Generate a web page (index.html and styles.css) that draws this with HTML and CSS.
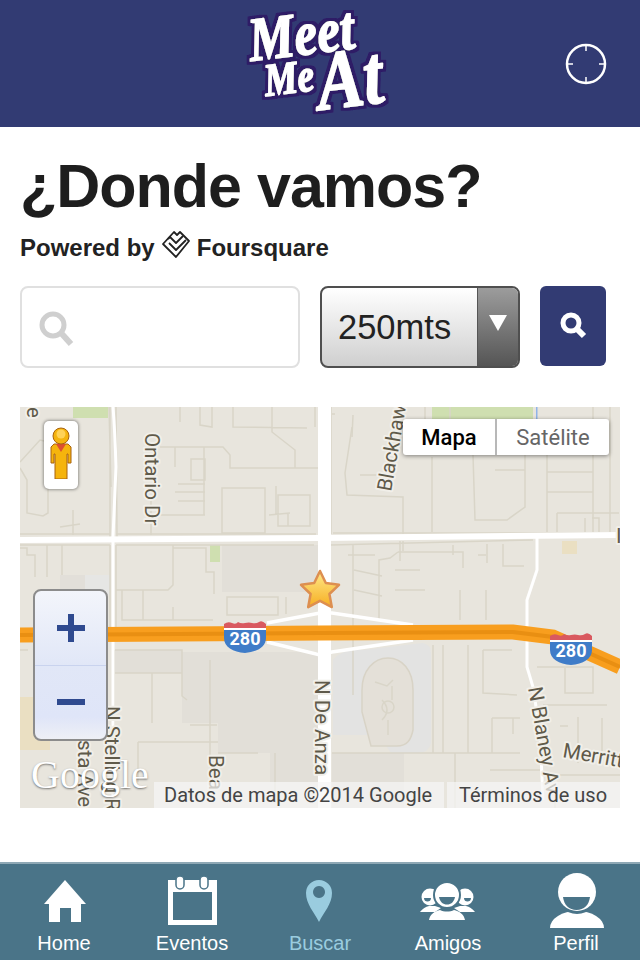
FILE: index.html
```html
<!DOCTYPE html>
<html lang="es">
<head>
<meta charset="utf-8">
<title>Meet Me At</title>
<link rel="stylesheet" href="styles.css">
</head>
<body>
<div class="app">
  <header class="topbar">
    <svg class="logo" viewBox="0 0 150 110" width="150" height="110">
      <defs>
        <linearGradient id="logoFill" gradientUnits="userSpaceOnUse" x1="0" y1="5" x2="0" y2="105">
          <stop offset="0" stop-color="#ffffff"/>
          <stop offset="0.55" stop-color="#f2f2f2"/>
          <stop offset="1" stop-color="#c4c4c4"/>
        </linearGradient>
        <filter id="logoOutline" x="-10%" y="-10%" width="120%" height="120%">
          <feMorphology in="SourceAlpha" operator="dilate" radius="2.6" result="fat"/>
          <feFlood flood-color="#2d1a66"/>
          <feComposite in2="fat" operator="in" result="edge"/>
          <feMerge>
            <feMergeNode in="edge"/>
            <feMergeNode in="SourceGraphic"/>
          </feMerge>
        </filter>
      </defs>
      <g class="logo-text">
        <text class="logo-meet" transform="translate(7 50) rotate(-7)" textLength="106" lengthAdjust="spacingAndGlyphs">Meet</text>
        <text class="logo-me" transform="translate(22 85) rotate(-7)" textLength="50" lengthAdjust="spacingAndGlyphs">Me</text>
        <text class="logo-at" transform="translate(76 99) rotate(-7)" textLength="66" lengthAdjust="spacingAndGlyphs">At</text>
      </g>
    </svg>
    <svg class="locate" viewBox="0 0 44 44" width="44" height="44">
      <circle cx="22" cy="22" r="19"/>
      <path d="M22 3v6M22 35v6M3 22h6M35 22h6"/>
    </svg>
  </header>

  <main class="content">
    <h1 class="title">¿Donde vamos?</h1>
    <p class="powered">
      <span>Powered by</span>
      <svg class="fsq" viewBox="0 0 30 30" width="30" height="30">
        <path d="M15 28 2 15 13 3l3 3 3-3 9 9z"/>
        <path d="M8 14l7 7L25 11M7 10l2-2 6 6 7-7"/>
      </svg>
      <span>Foursquare</span>
    </p>

    <div class="search">
      <div class="field">
        <svg class="glass" viewBox="0 0 36 36" width="36" height="36">
          <circle cx="15" cy="14" r="11"/>
          <path d="M24 23l9 10"/>
        </svg>
      </div>
      <div class="select">
        <span class="select-value">250mts</span>
        <span class="select-arrow"><i class="triangle"></i></span>
      </div>
      <button class="go" type="button" aria-label="Buscar">
        <svg class="go-icon" viewBox="0 0 28 28" width="28" height="28">
          <circle cx="12" cy="12" r="8"/>
          <path d="M18 18l7 7"/>
        </svg>
      </button>
    </div>

    <section class="map">
      <svg class="map-canvas" viewBox="20 407 600 401" width="600" height="401">
        <defs>
          <linearGradient id="starFill" x1="0" y1="0" x2="0" y2="1">
            <stop offset="0" stop-color="#ffe98a"/>
            <stop offset="1" stop-color="#f6ae22"/>
          </linearGradient>
          <clipPath id="shieldClip"><path d="M0 3q4-3 8-1t6-1q3 2 7 1t7 0q4 1 7-1t7 2V17c0 9-9 14-21 15C9 31 0 26 0 17z"/></clipPath>
        </defs>
        <rect class="land" x="20" y="407" width="600" height="401"/>

        <rect class="green" x="73" y="407" width="35" height="11"/>
        <rect class="green" x="432" y="407" width="101" height="14"/>
        <rect class="water" x="536" y="407" width="1.5" height="12"/>
        <rect class="green" x="210" y="545" width="10" height="17"/>
        <rect class="beige" x="562" y="541" width="15" height="13"/>
        <rect class="beige" x="20" y="697" width="30" height="53"/>

        <rect class="bldg" x="222" y="545" width="96" height="47"/>
        <rect class="bldg2" x="60" y="575" width="25" height="20"/>
        <rect class="bldg3" x="85" y="575" width="25" height="20"/>
        <rect class="bldg" x="115" y="650" width="67" height="23"/>
        <path class="bldg" d="M182 652H318V782H270V753H218V723H182z"/>
        <path class="bldg" d="M332 753H404V808H332z"/>

        <path class="lot" d="M333 660q10-12 30-10l60-7q8 2 8 10v90q-2 10-14 10h-26l-12-18H333z"/>
        <path class="oval" d="M362 690c0-20 12-32 26-32s25 12 25 32v40c-2 10-6 16-16 16h-26l-9-34z"/>
        <path class="minor" d="M375 682l12 4 6-6M392 686v14M382 700q10 10 0 20M388 720v15"/>
        <circle class="minor" cx="388" cy="707" r="6"/>

        <path class="minor" d="M20 468l7 12v33l16 3 5-3v-30M20 462l20-22 22 5M60 527l20-3M73 510v25M110 407v130M109 407l2 80"/>
        <path class="minor" d="M116 407l1 130M160 447h63l7 8v13h90M180 407v15M200 407v18l12 2v-20M233 407v20l74 1M272 407v25l23 18v18M315 407v20M175 447v20M151 500v35"/>
        <path class="minor" d="M191 459h14v21h-14zM178 484h27M175 492h30M178 501h27M204 447v68M160 515h45M222 488h43v45h-43zM276 486v29M269 515l21-2M278 495h32v31h-32zM288 513v13"/>
        <path class="minor" d="M116 534h200M20 534h90M20 545h90M116 545h198"/>
        <path class="minor" d="M20 548h7v7h8v22M47 545v32M62 545v30M110 545v90M116 545v90M173 545v40l-5 5H116M173 548h33v24h8v22"/>
        <path class="minor" d="M122 590v30h91M143 590v30M173 607v13M227 597h51v18h-51zM286 597v17"/>
        <path class="minor" d="M115 650h67v23H115M152 673v50M182 650v46l5 4M210 660v120M190 725h27M218 753h40M138 742h80M138 742v40M20 650h8M114 650v155M330 660v148M275 753v50"/>
        <path class="minor" d="M331 407v127M352 427l-7 46 2 22 56 2v30M335 414h-3M403 497v37M432 457v75M473 455l2 65h32l18-13v-52M547 455v77M593 407v125M547 472h46M547 492h46M557 513v19M557 513h62M585 518v14M592 518h7v14M610 407v125M333 533h284M360 475h20"/>
        <path class="minor" d="M331 545l202-5M353 545v150M400 541v20M403 541v10M398 552h65v16M398 552l-8 6-11 2v60M348 555h27M354 570l28 6M354 590l28 6M395 570h25M395 590h30M460 590v30M486 590v30M487 544v19M503 544v22h21M478 555h8M453 545v10"/>
        <path class="minor" d="M433 645v108M443 645v108M468 645v108M483 650h29M483 650v43l34 2M537 667h56v26h-28v-25M543 705h64M492 718h28M492 718v35M513 718v16M332 753h188M578 717v46M602 718v35M560 726h8M455 753v55M555 775v33M490 770h50M560 775h60"/>
        <path class="minor" d="M353 415l-1 22M425 407v25M450 407v48M470 420h40M495 470h30"/>

        <path class="road" d="M113 407q2 25 3 60l-3 70v271"/>
        <path class="road-major" d="M20 540q150-1 300-2l300-3"/>
        <rect class="road-wide" x="318" y="407" width="13" height="401"/>
        <path class="road" d="M537 538v32l-10 30v67l6 20 7 46 3 67"/>
        <path class="ramp" d="M267 623l53-10 12 0 81 12M267 642l53 13 12-3 81-12"/>
        <path class="freeway" d="M20 635l300-2 193-1 40 5 67 30"/>
        <path class="freeway-core" d="M20 635l300-2 193-1 40 5 67 30"/>

        <g class="labels">
          <text class="lbl" transform="translate(145 433) rotate(90)">Ontario Dr</text>
          <text class="lbl" transform="translate(391 492) rotate(-80)">Blackhaw</text>
          <text class="lbl" transform="translate(315 680) rotate(90)">N De Anza</text>
          <text class="lbl" transform="translate(105 706) rotate(90)">N Stelling R</text>
          <text class="lbl" transform="translate(78 740) rotate(90)">sta Ave</text>
          <text class="lbl" transform="translate(209 755) rotate(90)">Bea</text>
          <text class="lbl" transform="translate(528 688) rotate(80)">N Blaney Av</text>
          <text class="lbl" transform="translate(562 757) rotate(10)">Merritt</text>
          <text class="lbl" transform="translate(27 407) rotate(90)">e</text>
          <text class="lbl" x="616" y="543">I</text>
        </g>

        <g class="shield" transform="translate(224 621)">
          <g clip-path="url(#shieldClip)">
            <rect class="shield-red" width="42" height="7"/>
            <rect class="shield-white" y="7" width="42" height="2"/>
            <rect class="shield-blue" y="9" width="42" height="24"/>
          </g>
          <text class="shield-num" x="21" y="24">280</text>
        </g>
        <g class="shield" transform="translate(550 633)">
          <g clip-path="url(#shieldClip)">
            <rect class="shield-red" width="42" height="7"/>
            <rect class="shield-white" y="7" width="42" height="2"/>
            <rect class="shield-blue" y="9" width="42" height="24"/>
          </g>
          <text class="shield-num" x="21" y="24">280</text>
        </g>

        <path class="star" d="M320 571l5.800 12 13.200 1.800-9.600 9.200 2.400 13.100L320 600.800l-11.800 6.300 2.400-13.100-9.600-9.200 13.200-1.800z"/>
      </svg>

      <div class="pegman">
        <svg viewBox="0 0 24 52" width="24" height="52">
          <path class="peg-body" d="M5 17h14l3 3v16h-3v-9h-1v25H6V27H5v9H2V20z"/>
          <path class="peg-scarf" d="M7 17h10l-5 8z"/>
          <circle class="peg-head" cx="12" cy="9" r="8"/>
          <circle class="peg-shine" cx="12" cy="7" r="4.500"/>
        </svg>
      </div>

      <div class="maptype">
        <span class="maptype-btn is-active">Mapa</span>
        <span class="maptype-btn">Satélite</span>
      </div>

      <div class="zoom">
        <div class="zoom-btn">
          <svg viewBox="0 0 28 28" width="28" height="28"><path class="zoom-glyph" d="M0 11h11V0h6v11h11v6H17v11h-6V17H0z"/></svg>
        </div>
        <div class="zoom-btn">
          <svg viewBox="0 0 28 28" width="28" height="28"><path class="zoom-glyph" d="M0 11h28v6H0z"/></svg>
        </div>
      </div>

      <div class="google">Google</div>
      <div class="attrib">
        <span class="attrib-item attrib-data">Datos de mapa ©2014 Google</span>
        <span class="attrib-item attrib-terms">Términos de uso</span>
      </div>
    </section>
  </main>

  <nav class="tabs">
    <a class="tab">
      <svg class="tab-icon" viewBox="0 0 64 50" width="64" height="50">
        <path class="ic" d="M33 4 54 28H49V46H39V32H28V46H17V28H12z"/>
      </svg>
      <span class="tab-label">Home</span>
    </a>
    <a class="tab">
      <svg class="tab-icon" viewBox="0 0 64 50" width="64" height="50">
        <path class="ic ic-evenodd" d="M8 4h49v45H8zM13 16v28h39V16z"/>
        <rect class="ic-ring" x="16" y="0" width="8" height="13" rx="4"/>
        <rect class="ic-ring" x="40" y="0" width="8" height="13" rx="4"/>
      </svg>
      <span class="tab-label">Eventos</span>
    </a>
    <a class="tab is-current">
      <svg class="tab-icon" viewBox="0 0 64 50" width="64" height="50">
        <path class="ic-active ic-evenodd" d="M31 46C26 36 18 28 18 17a13 13 0 0 1 26 0c0 11-8 19-13 29zM31 10a6 6 0 1 0 .01 0z"/>
      </svg>
      <span class="tab-label">Buscar</span>
    </a>
    <a class="tab">
      <svg class="tab-icon" viewBox="0 0 64 50" width="64" height="50">
        <circle class="ic" cx="14" cy="21" r="8.500"/>
        <circle class="ic" cx="49" cy="21" r="8.500"/>
        <path class="ic" d="M4 36q4-5 9-6h6l6 2-6 4zM59 36q-4-5-9-6h-6l-6 2 6 4z"/>
        <circle class="ic ic-outline" cx="31" cy="19" r="13"/>
        <path class="ic-cut" d="M23 21h16c-1 5-4 7.500-8 7.500s-7-2.500-8-7.500z"/>
        <path class="ic-cut" d="M8 22h7c0 2.500-1.500 3.500-3.500 3.500S8 24.500 8 22zM48 22h7c0 2.500-1.500 3.500-3.500 3.500S48 24.500 48 22z"/>
        <path class="ic" d="M13 44c1-6 6-9 11-10 4 2 10 2 14 0 5 1 10 4 11 10z"/>
      </svg>
      <span class="tab-label">Amigos</span>
    </a>
    <a class="tab">
      <svg class="tab-icon" viewBox="0 0 64 50" width="64" height="50">
        <ellipse class="ic" cx="33" cy="52" rx="27" ry="17"/>
        <rect class="ic-cut" x="0" y="52" width="64" height="18"/>
        <circle class="ic-cut" cx="33" cy="16" r="22"/>
        <circle class="ic" cx="33" cy="16" r="19"/>
        <path class="ic-cut" d="M19 21h27c-1 8-6 13-13.500 13S20 29 19 21z"/>
      </svg>
      <span class="tab-label">Perfil</span>
    </a>
  </nav>
</div>
</body>
</html>
```

FILE: styles.css
```css
* { box-sizing: border-box; }

html, body {
  margin: 0;
  padding: 0;
  background: #fff;
}

.app {
  width: 640px;
  height: 960px;
  display: flex;
  flex-direction: column;
  font-family: "Liberation Sans", Arial, sans-serif;
  color: #1e1e1e;
  overflow: hidden;
}

/* Top bar */
.topbar {
  height: 127px;
  flex: none;
  background: #323b73;
  display: flex;
  align-items: center;
  justify-content: space-between;
  padding: 0 32px 0 244px;
}

.logo { display: block; margin-top: 4px; overflow: visible; }

.logo-text { filter: url(#logoOutline); }

.logo-text text {
  font-family: "Liberation Serif", serif;
  font-style: italic;
  font-weight: 700;
  fill: url(#logoFill);
  stroke: url(#logoFill);
  stroke-width: 1.400px;
  stroke-linejoin: round;
}

.logo-meet { font-size: 62px; }
.logo-me { font-size: 46px; }
.logo-at { font-size: 84px; }

.locate { display: block; }
.locate circle, .locate path {
  fill: none;
  stroke: #fff;
  stroke-width: 2.500px;
}
.locate path { stroke-width: 1.500px; }

/* Content */
.content {
  flex: 1;
  padding: 0 20px;
}

.title {
  margin: 24px 0 0;
  font-size: 61px;
  letter-spacing: -1px;
  line-height: 70px;
  font-weight: 700;
  color: #1e1e1e;
}

.powered {
  margin: 10px 0 0;
  height: 34px;
  display: flex;
  align-items: center;
  gap: 6px;
  font-size: 24px;
  font-weight: 700;
  color: #222;
}

.fsq { display: block; margin-top: -8px; }
.fsq path {
  fill: none;
  stroke: #222;
  stroke-width: 1.800px;
  stroke-linejoin: round;
}

.search {
  margin-top: 21px;
  display: flex;
  gap: 20px;
  align-items: flex-start;
}

.field {
  width: 280px;
  height: 82px;
  border: 2px solid #e0e0e0;
  border-radius: 8px;
  background: #fff;
  display: flex;
  align-items: center;
  padding: 4px 0 0 16px;
}

.glass { display: block; }
.glass circle {
  fill: none;
  stroke: #cfcfcf;
  stroke-width: 5px;
}
.glass path {
  stroke: #cfcfcf;
  stroke-width: 6px;
  fill: none;
}

.select {
  width: 200px;
  height: 82px;
  border: 2px solid #4f4f4f;
  border-radius: 8px;
  display: flex;
  overflow: hidden;
  background: linear-gradient(#ffffff, #cfcfcf);
}

.select-value {
  flex: 1;
  font-size: 34.500px;
  line-height: 78px;
  padding-left: 16px;
  color: #222;
}

.select-arrow {
  width: 41px;
  flex: none;
  background: linear-gradient(#9c9c9c, #555);
  border-left: 1px solid #555;
  display: flex;
  justify-content: center;
  padding-top: 27px;
}

.triangle {
  width: 0;
  height: 0;
  border-left: 9px solid transparent;
  border-right: 9px solid transparent;
  border-top: 16px solid #fff;
}

.go {
  width: 66px;
  height: 80px;
  padding: 0;
  border: 0;
  border-radius: 6px;
  background: #323b73;
  display: flex;
  align-items: center;
  justify-content: center;
}

.go-icon { display: block; margin-top: -3px; }
.go-icon circle {
  fill: none;
  stroke: #fff;
  stroke-width: 5px;
}
.go-icon path {
  fill: none;
  stroke: #fff;
  stroke-width: 6px;
}

/* Map */
.map {
  position: relative;
  width: 600px;
  height: 401px;
  margin-top: 39px;
  overflow: hidden;
}

.map-canvas { display: block; }

.land { fill: #e8e5dd; }
.green { fill: #cfdfb0; }
.water { fill: #8fb4e8; }
.beige { fill: #eadfc2; }
.bldg { fill: #e2dfd8; }
.bldg2 { fill: #e2dfd9; }
.bldg3 { fill: #e6e6e4; }
.lot { fill: #e3e3e2; }
.oval { fill: #e4e0d8; stroke: #d8d3c6; stroke-width: 1.500px; }

.minor {
  fill: none;
  stroke: #d9d5c8;
  stroke-width: 1.500px;
}

.road { fill: none; stroke: #fff; stroke-width: 3px; }
.road-major { fill: none; stroke: #fff; stroke-width: 6px; }
.road-wide { fill: #fff; }
.ramp { fill: none; stroke: #fff; stroke-width: 3.500px; }

.freeway {
  fill: none;
  stroke: #f89e1e;
  stroke-width: 15px;
}
.freeway-core {
  fill: none;
  stroke: #e98f12;
  stroke-width: 4px;
}

.lbl {
  font-family: Roboto, sans-serif;
  font-size: 20.500px;
  fill: #5f5a4a;
  stroke: #f1efe9;
  stroke-width: 4px;
  paint-order: stroke;
  stroke-linejoin: round;
}

.shield-red { fill: #d9595f; }
.shield-white { fill: #fff; }
.shield-blue { fill: #3f7cc8; }
.shield-num {
  font-family: Roboto, sans-serif;
  font-size: 18px;
  font-weight: 700;
  fill: #fff;
  text-anchor: middle;
}

.star {
  fill: url(#starFill);
  stroke: #dd8f50;
  stroke-width: 2.500px;
  stroke-linejoin: round;
}

/* Map overlays */
.pegman {
  position: absolute;
  left: 24px;
  top: 14px;
  width: 34px;
  height: 68px;
  background: #fff;
  border-radius: 5px;
  box-shadow: 0 0 3px 1px rgba(0, 0, 0, .35);
  display: flex;
  justify-content: center;
  padding-top: 6px;
}

.peg-body { fill: #f5b40d; stroke: #a8620e; stroke-width: 1px; }
.peg-scarf { fill: #dd5030; }
.peg-head { fill: #f5b40d; stroke: #a8620e; stroke-width: 1px; }
.peg-shine { fill: #ffd257; }

.maptype {
  position: absolute;
  left: 383px;
  top: 12px;
  width: 206px;
  height: 36px;
  display: flex;
  background: #fff;
  border-radius: 3px;
  box-shadow: 0 1px 4px rgba(0, 0, 0, .45);
  font-family: Roboto, sans-serif;
  font-size: 22px;
}

.maptype-btn {
  flex: 1;
  text-align: center;
  line-height: 38px;
  color: #666;
}
.maptype-btn:first-child { flex: 0 0 94px; border-right: 2px solid #b8b8b8; }
.maptype-btn.is-active { color: #000; font-weight: 500; }

.zoom {
  position: absolute;
  left: 13px;
  top: 182px;
  width: 75px;
  height: 152px;
  border: 2px solid #8c8c8c;
  border-radius: 8px;
  background: linear-gradient(#f3f5fb, #e1e7f7 50%, #dfe5f8 85%, #eef0f6);
  display: flex;
  flex-direction: column;
}

.zoom-btn {
  flex: 1;
  display: flex;
  align-items: center;
  justify-content: center;
}
.zoom-btn:first-child { border-bottom: 1px solid #c9d3ee; }
.zoom-glyph { fill: #2f4a8f; }

.google {
  position: absolute;
  left: 11px;
  top: 343px;
  font-family: "Liberation Serif", serif;
  font-size: 40px;
  line-height: 50px;
  color: #fff;
  text-shadow: 0 1px 2px rgba(60, 60, 60, .7);
}

.attrib {
  position: absolute;
  left: 134px;
  bottom: 0;
  right: 0;
  height: 26px;
  display: flex;
  gap: 3px;
  font-family: Roboto, sans-serif;
  font-size: 20px;
  line-height: 27px;
  color: #444;
}

.attrib-item {
  background: rgba(245, 245, 245, .72);
  white-space: nowrap;
}
.attrib-data { width: 290px; padding-left: 10px; }
.attrib-terms { flex: 1; padding-left: 12px; }

/* Bottom tabs */
.tabs {
  flex: none;
  height: 98px;
  background: #4a7488;
  border-top: 2px solid #8ea8b5;
  display: grid;
  grid-template-columns: repeat(5, 1fr);
}

.tab {
  display: flex;
  flex-direction: column;
  align-items: center;
  padding-top: 12px;
  color: #fff;
}
.tab.is-current { color: #9accdf; }

.tab-icon { display: block; overflow: visible; }

.tab-label {
  font-size: 20px;
  line-height: 24px;
  margin-top: 5px;
}

.ic { fill: #fff; }
.ic-evenodd { fill-rule: evenodd; }
.ic-active { fill: #9accdf; }
.ic-cut { fill: #4a7488; }
.ic-outline { stroke: #4a7488; stroke-width: 2px; }
.ic-ring { fill: #fff; stroke: #4a7488; stroke-width: 1.500px; }
```
